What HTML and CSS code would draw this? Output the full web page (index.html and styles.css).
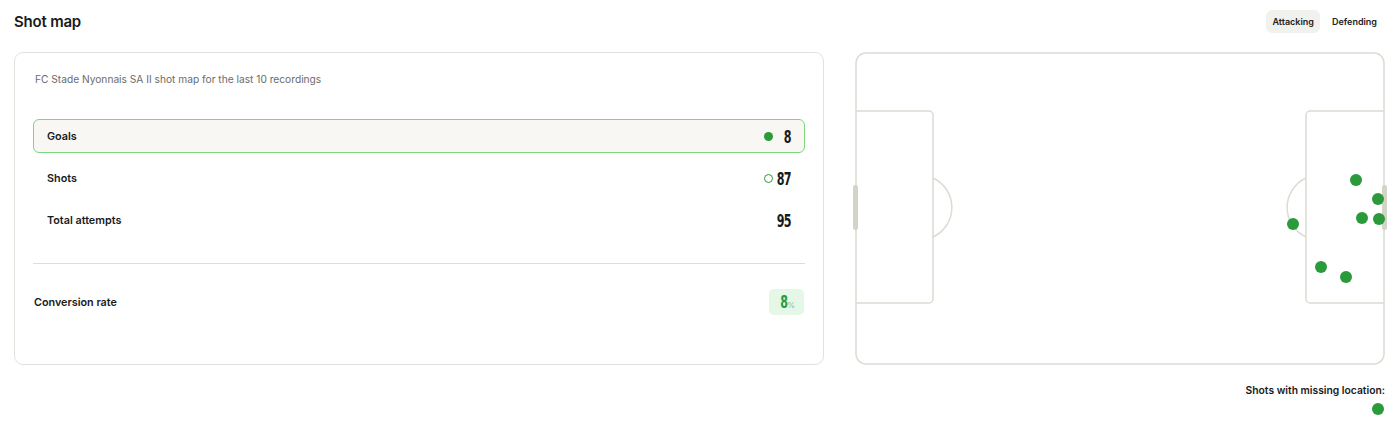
FILE: index.html
```html
<!DOCTYPE html>
<html>
<head>
  <meta charset="utf-8">
  <title>Shot map</title>
  <link rel="stylesheet" href="styles.css">
</head>
<body>
  <div class="header">
    <h1 class="title">Shot map</h1>
    <div class="tabs">
      <span class="tab active">Attacking</span>
      <span class="tab">Defending</span>
    </div>
  </div>

  <div class="content">
    <div class="card">
      <p class="subtitle">FC Stade Nyonnais SA II shot map for the last 10 recordings</p>

      <div class="rows">
        <div class="row selected">
          <span class="label">Goals</span>
          <span class="value"><i class="dot filled"></i><b>8</b></span>
        </div>
        <div class="row">
          <span class="label">Shots</span>
          <span class="value"><i class="dot hollow"></i><b>87</b></span>
        </div>
        <div class="row">
          <span class="label">Total attempts</span>
          <span class="value"><i></i><b>95</b></span>
        </div>
      </div>

      <div class="divider"></div>

      <div class="row conversion">
        <span class="label">Conversion rate</span>
        <span class="badge"><b>8</b><small>%</small></span>
      </div>
    </div>

    <div class="pitch-col">
      <svg class="pitch" width="530" height="313" viewBox="0 0 530 313">
        <!-- outline -->
        <rect x="1" y="1" width="528" height="311" rx="10" fill="#fff" stroke="#dcdcd3" stroke-width="1.5"/>
        <!-- left box -->
        <path d="M1 59 H74 a4 4 0 0 1 4 4 V247 a4 4 0 0 1 -4 4 H1" fill="none" stroke="#dcdcd3" stroke-width="1.5"/>
        <path d="M78 126 A32.5 32.5 0 0 1 78 185" fill="none" stroke="#dcdcd3" stroke-width="1.5"/>
        <rect x="-2" y="133" width="5" height="45" rx="2.5" fill="#d3d3c8"/>
        <!-- right box -->
        <path d="M529 59 H455 a4 4 0 0 0 -4 4 V247 a4 4 0 0 0 4 4 H529" fill="none" stroke="#dcdcd3" stroke-width="1.5"/>
        <path d="M451 126 A32.5 32.5 0 0 0 451 185" fill="none" stroke="#dcdcd3" stroke-width="1.5"/>
        <rect x="527" y="133" width="5" height="45" rx="2.5" fill="#d3d3c8"/>
        <!-- shots -->
        <g fill="#2a9a3b">
          <circle cx="501" cy="128" r="6"/>
          <circle cx="523" cy="147" r="6"/>
          <circle cx="507" cy="166" r="6"/>
          <circle cx="524" cy="167" r="6"/>
          <circle cx="438" cy="172" r="6"/>
          <circle cx="466" cy="215" r="6"/>
          <circle cx="491" cy="225" r="6"/>
        </g>
      </svg>
      <div class="missing">
        <span>Shots with missing location:</span>
        <i class="dot big"></i>
      </div>
    </div>
  </div>
</body>
</html>
```
FILE: styles.css
```css
body {
  margin: 0;
  padding: 0 15px 0 14px;
  font-family: Inter, "Noto Sans", sans-serif;
  color: #1a1a1a;
  background: #fff;
}

.header {
  display: flex;
  justify-content: space-between;
  align-items: center;
  height: 42px;
}

.title {
  margin: 0;
  font-size: 15px;
  font-weight: 600;
  letter-spacing: -0.2px;
}

.tabs {
  display: flex;
  gap: 6px;
  margin-right: 2px;
}

.tab {
  font-size: 9px;
  font-weight: 600;
  padding: 6px 6px;
  border-radius: 6px;
  color: #222;
}

.tab.active {
  background: #f1f1ed;
}

.content {
  display: flex;
  gap: 31px;
  margin-top: 10px;
}

.card {
  width: 772px;
  height: 275px;
  border: 1px solid #e2e2dd;
  border-radius: 9px;
  padding: 18px 18px;
}

.subtitle {
  margin: 0 0 0 2px;
  font-size: 10.2px;
  line-height: 16px;
  color: #6b6b6b;
}

.rows {
  display: flex;
  flex-direction: column;
  gap: 8px;
  margin-top: 32px;
}

.row {
  display: flex;
  justify-content: space-between;
  align-items: center;
  height: 32px;
  padding: 0 13px;
  border: 1px solid transparent;
  border-radius: 6px;
}

.row.selected {
  background: #f8f7f4;
  border: 1.5px solid #7ed67f;
}

.label {
  font-size: 10.8px;
  font-weight: 600;
}

.value {
  display: flex;
  align-items: center;
}

.value i {
  width: 9px;
  margin-right: 18px;
}

.value b {
  width: 0;
  display: flex;
  justify-content: flex-end;
}

.value b,
.badge b {
  font-family: "DejaVu Sans", sans-serif;
  font-size: 18px;
  font-weight: 700;
  transform: scaleX(0.62);
  transform-origin: right center;
  letter-spacing: -1px;
}

.dot {
  display: inline-block;
  width: 9px;
  height: 9px;
  border-radius: 50%;
  box-sizing: border-box;
}

.dot.filled {
  background: #2a9a3b;
}

.dot.hollow {
  border: 1.5px solid #2a9a3b;
}

.divider {
  height: 1px;
  background: #dddddd;
  margin: 26px 0 21px;
}

.conversion {
  padding: 0;
}

.badge {
  display: flex;
  align-items: baseline;
  justify-content: center;
  width: 35px;
  height: 26px;
  line-height: 26px;
  border-radius: 5px;
  background: #e5f7e6;
  color: #2a9a3b;
}

.badge b {
  display: inline-block;
  transform-origin: center;
  margin: 0 -2px 0 0;
}

.badge small {
  font-size: 8px;
  color: #8fbf95;
}

.pitch-col {
  display: flex;
  flex-direction: column;
}

.pitch {
  display: block;
  overflow: visible;
}

.missing {
  display: flex;
  flex-direction: column;
  align-items: flex-end;
  gap: 7px;
  margin-top: 19px;
  font-size: 10.3px;
  font-weight: 600;
}

.dot.big {
  width: 12px;
  height: 12px;
  background: #2a9a3b;
  margin-right: 1px;
}
```
